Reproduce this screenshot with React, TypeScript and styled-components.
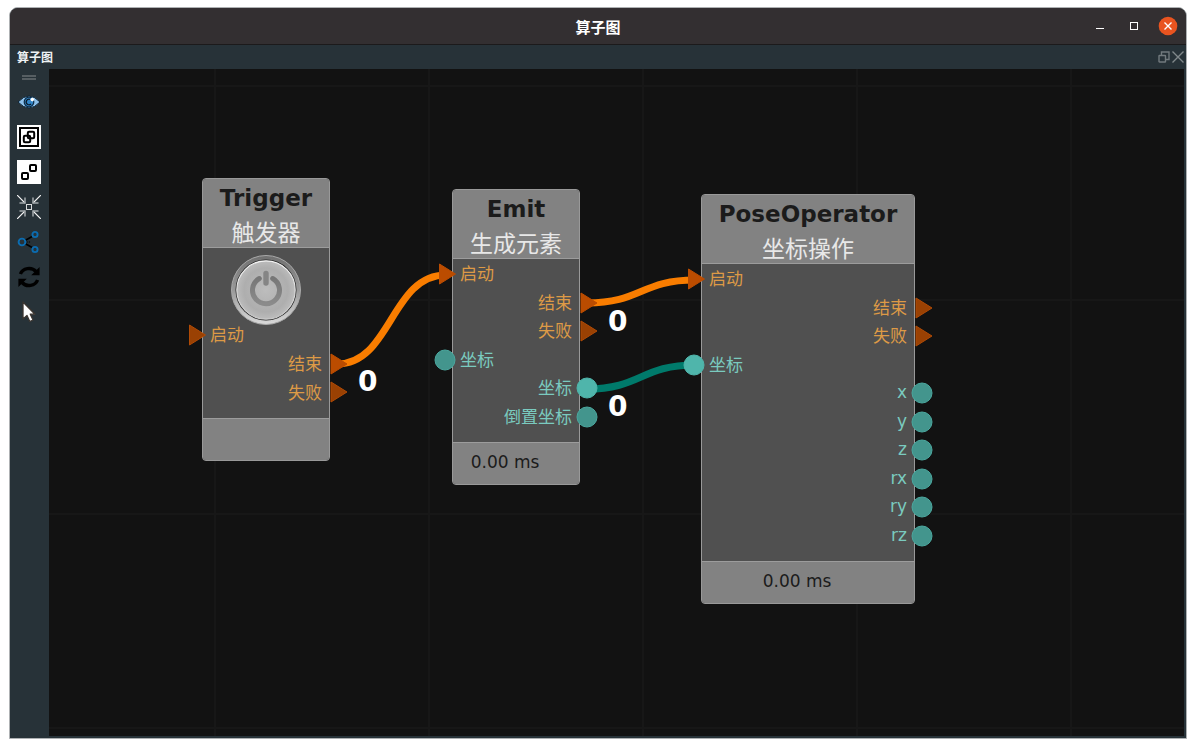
import React from "react";
import styled, { createGlobalStyle } from "styled-components";

const GlobalStyle = createGlobalStyle`
  *, *::before, *::after { box-sizing: border-box; }
  body {
    margin: 0;
    background: #ffffff;
    font-family: "DejaVu Sans", "Noto Sans CJK SC", sans-serif;
  }
`;

const Page = styled.div`
  display: flex;
  min-height: 100vh;
  padding: 7px 9px 9px;
`;

const Window = styled.main`
  flex: 1;
  min-width: 0;
  display: flex;
  flex-direction: column;
  border: 1px solid #aeb1b3;
  border-radius: 9px 9px 0 0;
  background: #273238;
  overflow: hidden;
`;

const TitleBar = styled.header`
  display: grid;
  grid-template-columns: 1fr auto 1fr;
  align-items: center;
  height: 37px;
  padding: 0 8px;
  background: #332f31;
  border-bottom: 1px solid #1c1a1b;
`;

const Title = styled.h1`
  grid-column: 2;
  margin: 0;
  padding-top: 2px;
  font: bold 15px/20px "Noto Sans CJK SC", sans-serif;
  color: #ffffff;
`;

const WindowControls = styled.div`
  display: flex;
  justify-content: flex-end;
  gap: 14px;
`;

const IconButton = styled.button<{ $size: number }>`
  display: block;
  flex: none;
  width: ${(p) => p.$size}px;
  height: ${(p) => p.$size}px;
  padding: 0;
  border: 0;
  background: transparent;
  cursor: pointer;

  svg {
    display: block;
    width: 100%;
    height: 100%;
  }
`;

const DockBar = styled.div`
  display: flex;
  align-items: center;
  justify-content: space-between;
  height: 24px;
  padding: 0 2px 0 7px;
`;

const DockTitle = styled.h2`
  margin: 0;
  font: bold 12px/18px "Noto Sans CJK SC", sans-serif;
  color: #eef2f4;
`;

const DockControls = styled.div`
  display: flex;
  gap: 2px;
`;

const Workspace = styled.div`
  flex: 1;
  display: flex;
  padding: 0 2px 2px 0;
`;

const Toolbar = styled.nav`
  flex: none;
  display: flex;
  flex-direction: column;
  align-items: center;
  gap: 11px;
  width: 39px;
  padding: 6px 1px 0 0;
`;

const Grip = styled.div`
  width: 14px;
  height: 5px;
  margin-bottom: -1px;
  border: solid #565e62;
  border-width: 2px 0;
`;

const Canvas = styled.section`
  position: relative;
  flex: 1;
  min-width: 0;
  min-height: 640px;
  overflow: hidden;
  background: #121212;
`;

const Layer = styled.svg`
  position: absolute;
  inset: 0;
  width: 100%;
  height: 100%;
`;

const EdgeCount = styled.span<{ $x: number; $y: number }>`
  position: absolute;
  left: ${(p) => p.$x}px;
  top: ${(p) => p.$y}px;
  font-size: 28px;
  line-height: 32px;
  font-weight: bold;
  color: #ffffff;
`;

const NodeBox = styled.article<{ $x: number; $y: number; $width: number }>`
  position: absolute;
  left: ${(p) => p.$x}px;
  top: ${(p) => p.$y}px;
  width: ${(p) => p.$width}px;
  border: 1px solid #999999;
  border-radius: 4px;
  background: #505050;
`;

const NodeHeader = styled.header`
  height: 69px;
  padding-top: 3px;
  background: #828282;
  border-bottom: 1px solid #9c9c9c;
  border-radius: 3px 3px 0 0;
  text-align: center;
  white-space: nowrap;
`;

const NodeName = styled.h3`
  margin: 0;
  font-size: 23px;
  line-height: 32px;
  font-weight: bold;
  color: #1b1b1b;
`;

const NodeCaption = styled.p`
  margin: 0;
  font: 23px/34px "Noto Sans CJK SC", sans-serif;
  color: #e8e8e8;
`;

const NodeBody = styled.div`
  padding: 1px 0 11px;
`;

const NodeFooter = styled.footer`
  height: 42px;
  padding: 7px 22px 0 0;
  background: #828282;
  border-top: 1px solid #9c9c9c;
  border-radius: 0 0 3px 3px;
  font-size: 17px;
  line-height: 24px;
  text-align: center;
  color: #1b1b1b;
`;

const PowerButton = styled(IconButton)`
  margin: 6px auto -4px;
`;

const PortList = styled.ul<{ $height: number }>`
  display: grid;
  grid-auto-rows: 1fr;
  height: ${(p) => p.$height}px;
  margin: 0;
  padding: 0;
  list-style: none;
`;

const PortRow = styled.li<{ $side: Side; $kind: Kind }>`
  position: relative;
  display: flex;
  justify-content: ${(p) => (p.$side === "in" ? "flex-start" : "flex-end")};
  align-items: center;
  padding: 0 7px;
  font-size: 17px;
  line-height: 24px;
  color: ${(p) => (p.$kind === "flow" ? "#dd9a46" : "#7acabf")};

  &:lang(en) {
    padding-bottom: 2px;
  }
`;

const PortMark = styled.svg<{ $side: Side }>`
  position: absolute;
  top: 3px;
  ${(p) => (p.$side === "in" ? "left" : "right")}: -19px;
  width: 22px;
  height: 22px;
`;

type Side = "in" | "out";
type Kind = "flow" | "data";

interface Port {
  label: string;
  side: Side;
  kind: Kind;
  linked?: boolean;
  lang?: string;
}

interface GraphNode {
  name: string;
  caption: string;
  x: number;
  y: number;
  width: number;
  portsHeight: number;
  time?: string;
  power?: boolean;
  ports: Port[];
}

const nodes: GraphNode[] = [
  {
    name: "Trigger",
    caption: "触发器",
    x: 153,
    y: 109,
    width: 128,
    portsHeight: 86,
    power: true,
    ports: [
      { label: "启动", side: "in", kind: "flow" },
      { label: "结束", side: "out", kind: "flow", linked: true },
      { label: "失败", side: "out", kind: "flow" },
    ],
  },
  {
    name: "Emit",
    caption: "生成元素",
    x: 403,
    y: 120,
    width: 128,
    portsHeight: 171,
    time: "0.00 ms",
    ports: [
      { label: "启动", side: "in", kind: "flow", linked: true },
      { label: "结束", side: "out", kind: "flow", linked: true },
      { label: "失败", side: "out", kind: "flow" },
      { label: "坐标", side: "in", kind: "data" },
      { label: "坐标", side: "out", kind: "data", linked: true },
      { label: "倒置坐标", side: "out", kind: "data" },
    ],
  },
  {
    name: "PoseOperator",
    caption: "坐标操作",
    x: 652,
    y: 125,
    width: 214,
    portsHeight: 285,
    time: "0.00 ms",
    ports: [
      { label: "启动", side: "in", kind: "flow", linked: true },
      { label: "结束", side: "out", kind: "flow" },
      { label: "失败", side: "out", kind: "flow" },
      { label: "坐标", side: "in", kind: "data", linked: true },
      { label: "x", side: "out", kind: "data", lang: "en" },
      { label: "y", side: "out", kind: "data", lang: "en" },
      { label: "z", side: "out", kind: "data", lang: "en" },
      { label: "rx", side: "out", kind: "data", lang: "en" },
      { label: "ry", side: "out", kind: "data", lang: "en" },
      { label: "rz", side: "out", kind: "data", lang: "en" },
    ],
  },
];

const edges = [
  { d: "M288 295C342 295 342 206 397 206", color: "#f97d00" },
  { d: "M538 234C592 234 592 211 646 211", color: "#f97d00" },
  { d: "M538 320C592 320 592 296 646 296", color: "#007a6b" },
];

const counts = [
  { x: 309, y: 297 },
  { x: 559, y: 237 },
  { x: 559, y: 322 },
];

const tools = [
  {
    label: "显示",
    icon: (
      <svg viewBox="0 0 24 24">
        <path d="M1 12Q12 0 23 12Q12 24 1 12Z" fill="#8cc0ea" stroke="#0d2233" strokeWidth="1" />
        <circle cx="12" cy="12" r="4.800" fill="#2f83c6" stroke="#0c2a44" strokeWidth="1.200" />
        <path d="M14 14a2.800 2.800 0 1 1-1-4.600" fill="none" stroke="#0c1d2c" strokeWidth="1.300" />
        <circle cx="15.300" cy="9.600" r="1.800" fill="#ffffff" />
      </svg>
    ),
  },
  {
    label: "组合",
    icon: (
      <svg viewBox="0 0 24 24">
        <path d="M0 0H24V24H0Z" fill="#ffffff" />
        <rect x="3" y="3" width="18" height="18" fill="none" stroke="#000" strokeWidth="2" />
        <rect x="10.800" y="6.800" width="6.400" height="6.400" rx="1.200" fill="none" stroke="#000" strokeWidth="2" />
        <rect x="6.800" y="10.800" width="6.400" height="6.400" rx="1.200" fill="none" stroke="#000" strokeWidth="2" />
      </svg>
    ),
  },
  {
    label: "取消组合",
    icon: (
      <svg viewBox="0 0 24 24">
        <path d="M0 0H24V24H0Z" fill="#ffffff" />
        <rect x="13" y="5" width="6" height="6" rx="1" fill="none" stroke="#000" strokeWidth="2" />
        <rect x="5" y="13" width="6" height="6" rx="1" fill="none" stroke="#000" strokeWidth="2" />
      </svg>
    ),
  },
  {
    label: "居中",
    icon: (
      <svg viewBox="0 0 24 24" fill="none">
        <path d="M0 0L8 8M24 0L16 8M0 24L8 16M24 24L16 16" stroke="#f2f2f2" strokeWidth="1.200" />
        <path
          d="M8 2.500V8H2.500M16 2.500V8H21.500M8 21.500V16H2.500M16 21.500V16H21.500"
          stroke="#a4aaad"
          strokeWidth="1.500"
        />
        <rect x="9.500" y="9.500" width="5" height="5" stroke="#d9dbdc" />
      </svg>
    ),
  },
  {
    label: "连接",
    icon: (
      <svg viewBox="0 0 24 24" fill="none">
        <path d="M8 10.500L16 6M8 13.500L16 18" stroke="#000" strokeWidth="1.600" />
        <path d="M9.500 12H14" stroke="#000" strokeWidth="1.200" strokeDasharray="1.300 1" />
        <g stroke="#0b6cb0" strokeWidth="1.900">
          <circle cx="5" cy="12" r="3.400" />
          <circle cx="18" cy="4.500" r="2.600" />
          <circle cx="18" cy="19.500" r="2.600" />
        </g>
      </svg>
    ),
  },
  {
    label: "刷新",
    icon: (
      <svg viewBox="0 0 24 24">
        <path
          d="M3.400 9A9 8 0 0 1 19 6.500M20.600 15A9 8 0 0 1 5 17.500"
          fill="none"
          stroke="#000"
          strokeWidth="3.400"
        />
        <path d="M22.600 2V10.200H14.200ZM1.400 22V13.800H9.800Z" fill="#000" />
      </svg>
    ),
  },
  {
    label: "选择",
    icon: (
      <svg viewBox="0 0 24 24">
        <path
          d="M6 2V19L10 15.500L12.800 21.500L16 20L13.300 14.200H18Z"
          fill="#ffffff"
          stroke="#3b3530"
          strokeWidth="1.300"
          strokeLinejoin="round"
        />
      </svg>
    ),
  },
];

const PowerIcon = () => (
  <svg viewBox="0 0 70 70" fill="none">
    <defs>
      <linearGradient id="rim" x1="0" y1="0" x2="0" y2="1">
        <stop offset="0" stopColor="#6f6f6f" />
        <stop offset="0.5" stopColor="#999999" />
        <stop offset="1" stopColor="#dadada" />
      </linearGradient>
      <radialGradient id="face" cx="0.5" cy="0.5" r="0.5">
        <stop offset="0" stopColor="#bdbdbd" />
        <stop offset="0.75" stopColor="#aeaeae" />
        <stop offset="1" stopColor="#bcbcbc" />
      </radialGradient>
      <linearGradient id="edge" x1="0" y1="0" x2="0" y2="1">
        <stop offset="0" stopColor="#f4f4f4" />
        <stop offset="1" stopColor="#c8c8c8" />
      </linearGradient>
      <linearGradient id="glyph" x1="0" y1="0" x2="0" y2="1">
        <stop offset="0" stopColor="#777777" />
        <stop offset="1" stopColor="#8b8b8b" />
      </linearGradient>
    </defs>
    <circle cx="35" cy="35" r="34.500" fill="url(#rim)" stroke="#a9a9a9" strokeWidth="1" />
    <circle cx="35" cy="35" r="30.500" fill="#222222" />
    <circle cx="35" cy="35" r="29.200" fill="url(#face)" stroke="url(#edge)" strokeWidth="1.200" />
    <path
      d="M28.300 23.500A13.500 13.500 0 1 0 41.700 23.500"
      stroke="url(#glyph)"
      strokeWidth="5"
      strokeLinecap="round"
    />
    <path d="M32.300 18.500a2.700 2.700 0 0 1 5.400 0v9.500a2.700 2.700 0 0 1-5.400 0Z" fill="#858585" />
  </svg>
);

const PortSymbol = ({ side, kind, linked }: Omit<Port, "label">) => (
  <PortMark $side={side} viewBox="0 0 22 22" aria-hidden="true">
    {kind === "flow" ? (
      <path
        d={side === "in" ? "M5.500 1L21.500 11L5.500 21Z" : "M5 1L21 11L5 21Z"}
        fill={linked ? "#bb4c00" : "#9a4103"}
        stroke={linked ? "#bb4c00" : "#b04a05"}
        strokeLinejoin="round"
      />
    ) : (
      <circle
        cx="11"
        cy="11"
        r="10"
        fill={linked ? "#4fb5ab" : "#43958d"}
        stroke={linked ? "#4fb5ab" : "#4ba89f"}
      />
    )}
  </PortMark>
);

const NodeCard = ({ node }: { node: GraphNode }) => (
  <NodeBox $x={node.x} $y={node.y} $width={node.width}>
    <NodeHeader>
      <NodeName>{node.name}</NodeName>
      <NodeCaption>{node.caption}</NodeCaption>
    </NodeHeader>
    <NodeBody>
      {node.power && (
        <PowerButton $size={70} type="button" aria-label="触发">
          <PowerIcon />
        </PowerButton>
      )}
      <PortList $height={node.portsHeight}>
        {node.ports.map((port, i) => (
          <PortRow key={i} $side={port.side} $kind={port.kind} lang={port.lang}>
            <PortSymbol side={port.side} kind={port.kind} linked={port.linked} />
            {port.label}
          </PortRow>
        ))}
      </PortList>
    </NodeBody>
    <NodeFooter>{node.time}</NodeFooter>
  </NodeBox>
);

export default function App() {
  return (
    <>
      <GlobalStyle />
      <Page>
        <Window>
          <TitleBar>
            <Title>算子图</Title>
            <WindowControls>
              <IconButton $size={20} type="button" aria-label="最小化">
                <svg viewBox="0 0 20 20">
                  <path d="M6 12H14V13H6Z" fill="#fff" />
                </svg>
              </IconButton>
              <IconButton $size={20} type="button" aria-label="最大化">
                <svg viewBox="0 0 20 20">
                  <rect x="6.500" y="6.500" width="7" height="7" fill="none" stroke="#fff" />
                </svg>
              </IconButton>
              <IconButton $size={20} type="button" aria-label="关闭">
                <svg viewBox="0 0 20 20">
                  <circle cx="10" cy="10" r="9.300" fill="#e95420" />
                  <path d="M6.500 6.500L13.500 13.500M13.500 6.500L6.500 13.500" stroke="#fff" strokeWidth="1.400" />
                </svg>
              </IconButton>
            </WindowControls>
          </TitleBar>
          <DockBar>
            <DockTitle>算子图</DockTitle>
            <DockControls>
              <IconButton $size={12} type="button" aria-label="浮动">
                <svg viewBox="0 0 12 12" fill="none" stroke="#727a7e" strokeWidth="1.400">
                  <path d="M3.500 4V1H11V8.500H8" />
                  <rect x="1" y="4.500" width="6.500" height="6.500" rx="0.500" />
                </svg>
              </IconButton>
              <IconButton $size={12} type="button" aria-label="关闭面板">
                <svg viewBox="0 0 12 12" fill="none" stroke="#81888b" strokeWidth="1.400">
                  <path d="M0.500 0.500L11.500 11.500M11.500 0.500L0.500 11.500" />
                </svg>
              </IconButton>
            </DockControls>
          </DockBar>
          <Workspace>
            <Toolbar aria-label="工具">
              <Grip />
              {tools.map((tool) => (
                <IconButton key={tool.label} $size={24} type="button" aria-label={tool.label}>
                  {tool.icon}
                </IconButton>
              ))}
            </Toolbar>
            <Canvas>
              <Layer aria-hidden="true">
                <defs>
                  <pattern id="grid" x="165" y="16" width="214" height="214" patternUnits="userSpaceOnUse">
                    <path d="M0 0H214V2H2V214H0Z" fill="#171717" />
                  </pattern>
                </defs>
                <rect width="100%" height="100%" fill="url(#grid)" />
                {edges.map((edge) => (
                  <path key={edge.d} d={edge.d} fill="none" stroke={edge.color} strokeWidth="7" />
                ))}
              </Layer>
              {nodes.map((node) => (
                <NodeCard key={node.name} node={node} />
              ))}
              {counts.map((c) => (
                <EdgeCount key={`${c.x}-${c.y}`} $x={c.x} $y={c.y}>
                  0
                </EdgeCount>
              ))}
            </Canvas>
          </Workspace>
        </Window>
      </Page>
    </>
  );
}
